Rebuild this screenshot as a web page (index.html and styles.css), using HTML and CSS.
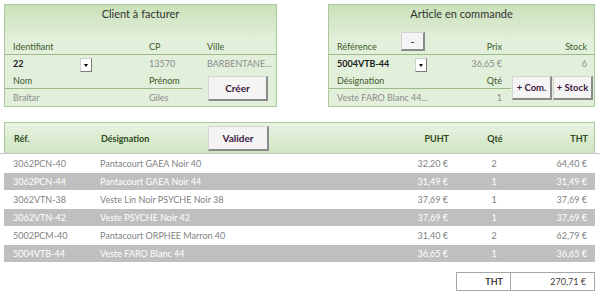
FILE: index.html
```html
<!DOCTYPE html>
<html lang="fr">
<head>
  <meta charset="UTF-8">
  <title>Facturation</title>
  <link rel="stylesheet" href="styles.css">
</head>
<body>
  <div class="top">
    <section class="panel client">
      <h2 class="panel-title">Client à facturer</h2>
      <div class="form">
        <div class="cell lbl line">Identifiant</div>
        <div class="cell lbl line">CP</div>
        <div class="cell lbl line">Ville</div>
        <div class="cell val strong"><span class="pick">22</span><span class="combo"></span></div>
        <div class="cell val dim">13570</div>
        <div class="cell val dim">BARBENTANE...</div>
        <div class="cell lbl line">Nom</div>
        <div class="cell lbl line">Prénom</div>
        <div class="side"><button class="btn creer">Créer</button></div>
        <div class="cell val dim">Braltar</div>
        <div class="cell val dim">Giles</div>
      </div>
    </section>

    <section class="panel article">
      <h2 class="panel-title">Article en commande</h2>
      <div class="form">
        <div class="cell lbl line ref"><span>Référence</span><button class="btn minus">-</button></div>
        <div class="cell lbl line num">Prix</div>
        <div class="cell lbl line num last">Stock</div>
        <div class="cell val strong ref"><span>5004VTB-44</span><span class="combo"></span></div>
        <div class="cell val dim num">36,65 €</div>
        <div class="cell val dim num last">6</div>
        <div class="cell lbl line">Désignation</div>
        <div class="cell lbl line num">Qté</div>
        <div class="side pair">
          <button class="btn">+ Com.</button>
          <button class="btn">+ Stock</button>
        </div>
        <div class="cell val dim">Veste FARO Blanc 44...</div>
        <div class="cell val dim num">1</div>
      </div>
    </section>
  </div>

  <section class="order">
    <div class="order-head">
      <div class="col">Réf.</div>
      <div class="col des"><span class="des-label">Désignation</span><button class="btn valider">Valider</button></div>
      <div class="col right">PUHT</div>
      <div class="col mid">Qté</div>
      <div class="col right">THT</div>
    </div>
    <div class="rows">
      <div class="row">
        <div class="col">3062PCN-40</div><div class="col">Pantacourt GAEA Noir 40</div>
        <div class="col right">32,20 €</div><div class="col mid">2</div><div class="col right">64,40 €</div>
      </div>
      <div class="row alt">
        <div class="col">3062PCN-44</div><div class="col">Pantacourt GAEA Noir 44</div>
        <div class="col right">31,49 €</div><div class="col mid">1</div><div class="col right">31,49 €</div>
      </div>
      <div class="row">
        <div class="col">3062VTN-38</div><div class="col">Veste Lin Noir PSYCHE Noir 38</div>
        <div class="col right">37,69 €</div><div class="col mid">1</div><div class="col right">37,69 €</div>
      </div>
      <div class="row alt">
        <div class="col">3062VTN-42</div><div class="col">Veste PSYCHE Noir 42</div>
        <div class="col right">37,69 €</div><div class="col mid">1</div><div class="col right">37,69 €</div>
      </div>
      <div class="row">
        <div class="col">5002PCM-40</div><div class="col">Pantacourt ORPHEE Marron 40</div>
        <div class="col right">31,40 €</div><div class="col mid">2</div><div class="col right">62,79 €</div>
      </div>
      <div class="row alt">
        <div class="col">5004VTB-44</div><div class="col">Veste FARO Blanc 44</div>
        <div class="col right">36,65 €</div><div class="col mid">1</div><div class="col right">36,65 €</div>
      </div>
    </div>
    <div class="total">
      <div class="total-label">THT</div>
      <div class="total-value">270,71 €</div>
    </div>
  </section>
</body>
</html>
```

FILE: styles.css
```css
body {
  margin: 0;
  width: 600px;
  font-family: Lato, "Open Sans", sans-serif;
  font-size: 9px;
  color: #3a3a3a;
  background-color: #ffffff;
}
.top {
  display: flex;
  justify-content: space-between;
  padding: 4px 5px 0 4px;
}
.panel {
  border: 1px solid #a9c99a;
  background: linear-gradient(#c9e1b9, #e2efda 34px);
  box-sizing: border-box;
}
.client {
  width: 273px;
}
.article {
  width: 267px;
}
.panel-title {
  margin: 0;
  height: 33px;
  padding-top: 1px;
  box-sizing: border-box;
  text-align: center;
  font-size: 11px;
  font-weight: normal;
  line-height: 16px;
  color: #333333;
}
.form {
  display: grid;
  grid-template-rows: repeat(4, 17px);
}
.client .form {
  grid-template-columns: 139px 58px 74px;
}
.article .form {
  grid-template-columns: 100px 82px 83px;
}
.cell {
  display: flex;
  align-items: center;
  padding-left: 5px;
  white-space: nowrap;
}
.cell:nth-child(3n+1) {
  padding-left: 8px;
}
.line {
  border-bottom: 1px solid #9dbb8a;
}
.lbl {
  color: #3c5a2c;
}
.strong {
  font-weight: bold;
  color: #1a1a1a;
}
.dim {
  color: #8c8c8c;
}
.num {
  justify-content: flex-end;
  padding-right: 9px;
}
.num.last {
  padding-right: 7px;
}
.pick {
  width: 67px;
}
.combo {
  position: relative;
  width: 10px;
  height: 12px;
  background-color: #ffffff;
  border: 1px solid #d0d0d0;
  border-right-color: #7a7a7a;
  border-bottom-color: #7a7a7a;
  margin-top: 2px;
}
.combo::after {
  content: "";
  position: absolute;
  left: 3px;
  top: 5px;
  border-left: 2px solid transparent;
  border-right: 2px solid transparent;
  border-top: 3px solid #000000;
}
.ref {
  justify-content: space-between;
  padding-right: 2px;
}
.btn {
  font-family: inherit;
  font-weight: bold;
  font-size: 9.5px;
  color: #3d1a3d;
  background-color: #f4f4f4;
  border: 1px solid #d4d4d4;
  border-right: 2px solid #8a8a8a;
  border-bottom: 2px solid #8a8a8a;
  padding: 0;
  cursor: pointer;
}
.minus {
  width: 24px;
  height: 19px;
  align-self: flex-end;
  margin-bottom: 3px;
  margin-right: 2px;
}
.side {
  grid-row: 3 / span 2;
  grid-column: 3;
  display: flex;
  align-items: flex-start;
  padding-top: 4px;
}
.creer {
  margin-left: 6px;
  width: 60px;
  height: 25px;
  font-size: 10px;
}
.pair {
  gap: 1px;
  padding-left: 1px;
}
.pair .btn {
  width: 40px;
  height: 24px;
}
.order {
  margin-top: 15px;
}
.order-head,
.row {
  display: grid;
  grid-template-columns: 87px 289px 76px 76px 63px;
  margin: 0 5px 0 4px;
}
.order-head {
  height: 30px;
  border: 1px solid #a9c99a;
  border-bottom: none;
  background: linear-gradient(#e9f3e3, #cfe5c1);
  font-weight: bold;
  color: #2e4a20;
}
.col {
  display: flex;
  align-items: center;
  padding-left: 9px;
  white-space: nowrap;
}
.right {
  justify-content: flex-end;
  padding-left: 0;
  padding-right: 8px;
}
.mid {
  justify-content: center;
  padding-left: 0;
}
.des-label {
  width: 107px;
}
.valider {
  width: 61px;
  height: 25px;
  font-size: 10px;
}
.rows {
  border-top: 1px solid #c4c4c4;
}
.row {
  height: 18px;
  color: #7f7f7f;
}
.row.alt {
  background-color: #bfbfbf;
  color: #ffffff;
  border-top: 1px solid #ffffff;
  height: 17px;
}
.total {
  display: flex;
  justify-content: flex-end;
  margin: 10px 5px 0 0;
}
.total-label,
.total-value {
  height: 17px;
  border: 1px solid #a6a6a6;
  display: flex;
  align-items: center;
  justify-content: flex-end;
  color: #404040;
}
.total-label {
  width: 46px;
  padding-right: 7px;
  border-right: none;
  font-weight: bold;
}
.total-value {
  width: 75px;
  padding-right: 8px;
}
```
